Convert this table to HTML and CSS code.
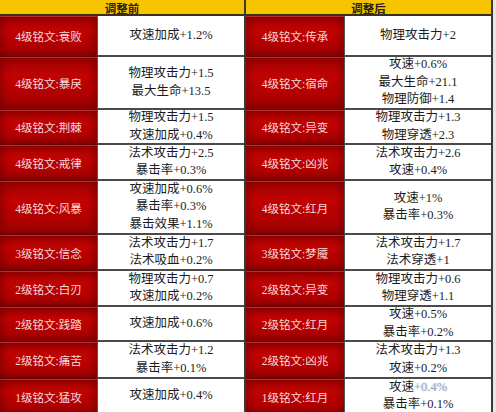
FILE: index.html
```html
<!DOCTYPE html>
<html lang="zh-CN">
<head>
<meta charset="utf-8">
<title>铭文调整</title>
<link rel="stylesheet" href="styles.css">
</head>
<body>
<div class="page">
  <div class="table left">
    <div class="head">调整前</div>
    <div class="name">4级铭文:衰败</div>
    <div class="val"><span>攻速加成+1.2%</span></div>
    <div class="name">4级铭文:暴戾</div>
    <div class="val"><span>物理攻击力+1.5</span><span>最大生命+13.5</span></div>
    <div class="name">4级铭文:荆棘</div>
    <div class="val"><span>物理攻击力+1.5</span><span>攻速加成+0.4%</span></div>
    <div class="name">4级铭文:戒律</div>
    <div class="val"><span>法术攻击力+2.5</span><span>暴击率+0.3%</span></div>
    <div class="name">4级铭文:风暴</div>
    <div class="val"><span>攻速加成+0.6%</span><span>暴击率+0.3%</span><span>暴击效果+1.1%</span></div>
    <div class="name">3级铭文:信念</div>
    <div class="val"><span>法术攻击力+1.7</span><span>法术吸血+0.2%</span></div>
    <div class="name">2级铭文:白刃</div>
    <div class="val"><span>物理攻击力+0.7</span><span>攻速加成+0.2%</span></div>
    <div class="name">2级铭文:践踏</div>
    <div class="val"><span>攻速加成+0.6%</span></div>
    <div class="name">2级铭文:痛苦</div>
    <div class="val"><span>法术攻击力+1.2</span><span>暴击率+0.1%</span></div>
    <div class="name">1级铭文:猛攻</div>
    <div class="val"><span>攻速加成+0.4%</span></div>
  </div>
  <div class="table right">
    <div class="head">调整后</div>
    <div class="name">4级铭文:传承</div>
    <div class="val"><span>物理攻击力+2</span></div>
    <div class="name">4级铭文:宿命</div>
    <div class="val"><span>攻速+0.6%</span><span>最大生命+21.1</span><span>物理防御+1.4</span></div>
    <div class="name">4级铭文:异变</div>
    <div class="val"><span>物理攻击力+1.3</span><span>物理穿透+2.3</span></div>
    <div class="name">4级铭文:凶兆</div>
    <div class="val"><span>法术攻击力+2.6</span><span>攻速+0.4%</span></div>
    <div class="name">4级铭文:红月</div>
    <div class="val"><span>攻速+1%</span><span>暴击率+0.3%</span></div>
    <div class="name">3级铭文:梦魇</div>
    <div class="val"><span>法术攻击力+1.7</span><span>法术穿透+1</span></div>
    <div class="name">2级铭文:异变</div>
    <div class="val"><span>物理攻击力+0.6</span><span>物理穿透+1.1</span></div>
    <div class="name">2级铭文:红月</div>
    <div class="val"><span>攻速+0.5%</span><span>暴击率+0.2%</span></div>
    <div class="name">2级铭文:凶兆</div>
    <div class="val"><span>法术攻击力+1.3</span><span>攻速+0.2%</span></div>
    <div class="name">1级铭文:红月</div>
    <div class="val"><span>攻速<em class="mark">+0.4%</em></span><span>暴击率+0.1%</span></div>
  </div>
</div>
</body>
</html>
```
FILE: styles.css
```css
html, body {
  margin: 0;
  padding: 0;
  background: #e6e6e6;
}
.page {
  display: flex;
  width: 496px;
  height: 412px;
  overflow: hidden;
  font-family: "Liberation Serif", "Noto Sans CJK SC", serif;
}
.table {
  display: grid;
  grid-template-rows: 16px 41px 53px 35px 36px 54px 36px 36px 35px 37px 36px;
  border-right: 2px solid #3a3a3a;
  background: #fff;
}
.left {
  grid-template-columns: 97px 147px;
}
.right {
  grid-template-columns: 98px 147px;
}
.head {
  grid-column: 1 / 3;
  padding-top: 3px;
  background: #f7c500;
  border-bottom: 2px solid #3a3020;
  box-sizing: border-box;
  font-family: "Noto Sans CJK SC", sans-serif;
  font-weight: 700;
  font-size: 11.5px;
  line-height: 11px;
  text-align: center;
  color: #2a2210;
}
.name {
  display: flex;
  align-items: center;
  justify-content: center;
  box-sizing: border-box;
  background: linear-gradient(to bottom, #9c0000 0%, #c00303 35%, #b30000 70%, #960000 100%);
  box-shadow: inset 0 1px 0 rgba(255, 140, 140, 0.35), inset 4px 0 6px rgba(90, 0, 0, 0.35), inset -4px 0 6px rgba(90, 0, 0, 0.35);
  border-bottom: 1px solid #6a0000;
  color: #f7d9d9;
  font-size: 11.5px;
  white-space: nowrap;
}
.val {
  display: flex;
  flex-direction: column;
  align-items: center;
  justify-content: center;
  box-sizing: border-box;
  border-left: 1px solid #555;
  border-bottom: 2px solid #4a4a4a;
  color: #1c1c1c;
  font-size: 12.5px;
  line-height: 17.5px;
  white-space: nowrap;
}
.mark {
  font-style: normal;
  color: #9aa8bd;
  text-shadow: 0 0 2px #b8c6da;
}
```
